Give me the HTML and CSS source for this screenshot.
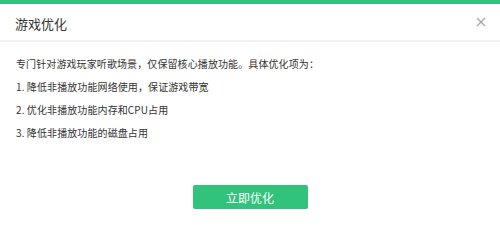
FILE: index.html
```html
<!DOCTYPE html>
<html lang="zh-CN">
<head>
<meta charset="utf-8">
<link rel="stylesheet" href="styles.css">
</head>
<body>
<div class="dialog">
  <div class="topbar"></div>
  <div class="header">
    <span class="title">游戏优化</span>
    <svg class="close" width="10" height="10" viewBox="0 0 10 10"><path d="M1 1L9 9M9 1L1 9" stroke="#a8a8a8" stroke-width="1.4" fill="none"/></svg>
  </div>
  <div class="content">
    <p>专门针对游戏玩家听歌场景，仅保留核心播放功能。具体优化项为：</p>
    <p>1. 降低非播放功能网络使用，保证游戏带宽</p>
    <p>2. 优化非播放功能内存和CPU占用</p>
    <p>3. 降低非播放功能的磁盘占用</p>
  </div>
  <div class="footer">
    <button class="btn">立即优化</button>
  </div>
</div>
</body>
</html>
```
FILE: styles.css
```css
html, body {
  margin: 0;
  padding: 0;
  background: #fff;
}
body {
  width: 500px;
  height: 239px;
  overflow: hidden;
  font-family: "Noto Sans CJK SC", "Noto Sans", sans-serif;
  color: #333;
}
.dialog {
  display: flex;
  flex-direction: column;
  height: 239px;
}
.topbar {
  height: 4px;
  background: #31c27c;
}
.header {
  height: 36px;
  display: flex;
  align-items: center;
  justify-content: space-between;
  padding: 0 14px 0 15px;
  border-bottom: 2px solid #f3f3f3;
}
.title {
  font-size: 13px;
  color: #333;
  line-height: 1;
  margin-top: 3px;
}
.close {
  display: block;
  margin-top: 0;
}
.content {
  padding: 10px 16px 0;
}
.content p {
  margin: 0;
  font-size: 10px;
  line-height: 23px;
  letter-spacing: 0.1px;
  color: #333;
}
.footer {
  display: flex;
  justify-content: center;
  padding-top: 41px;
}
.btn {
  width: 115px;
  height: 24px;
  border: none;
  border-radius: 2px;
  background: #31c27c;
  color: #fff;
  font-family: "Noto Sans CJK SC", sans-serif;
  font-size: 12px;
  padding: 0;
  margin-left: 0;
}
```
